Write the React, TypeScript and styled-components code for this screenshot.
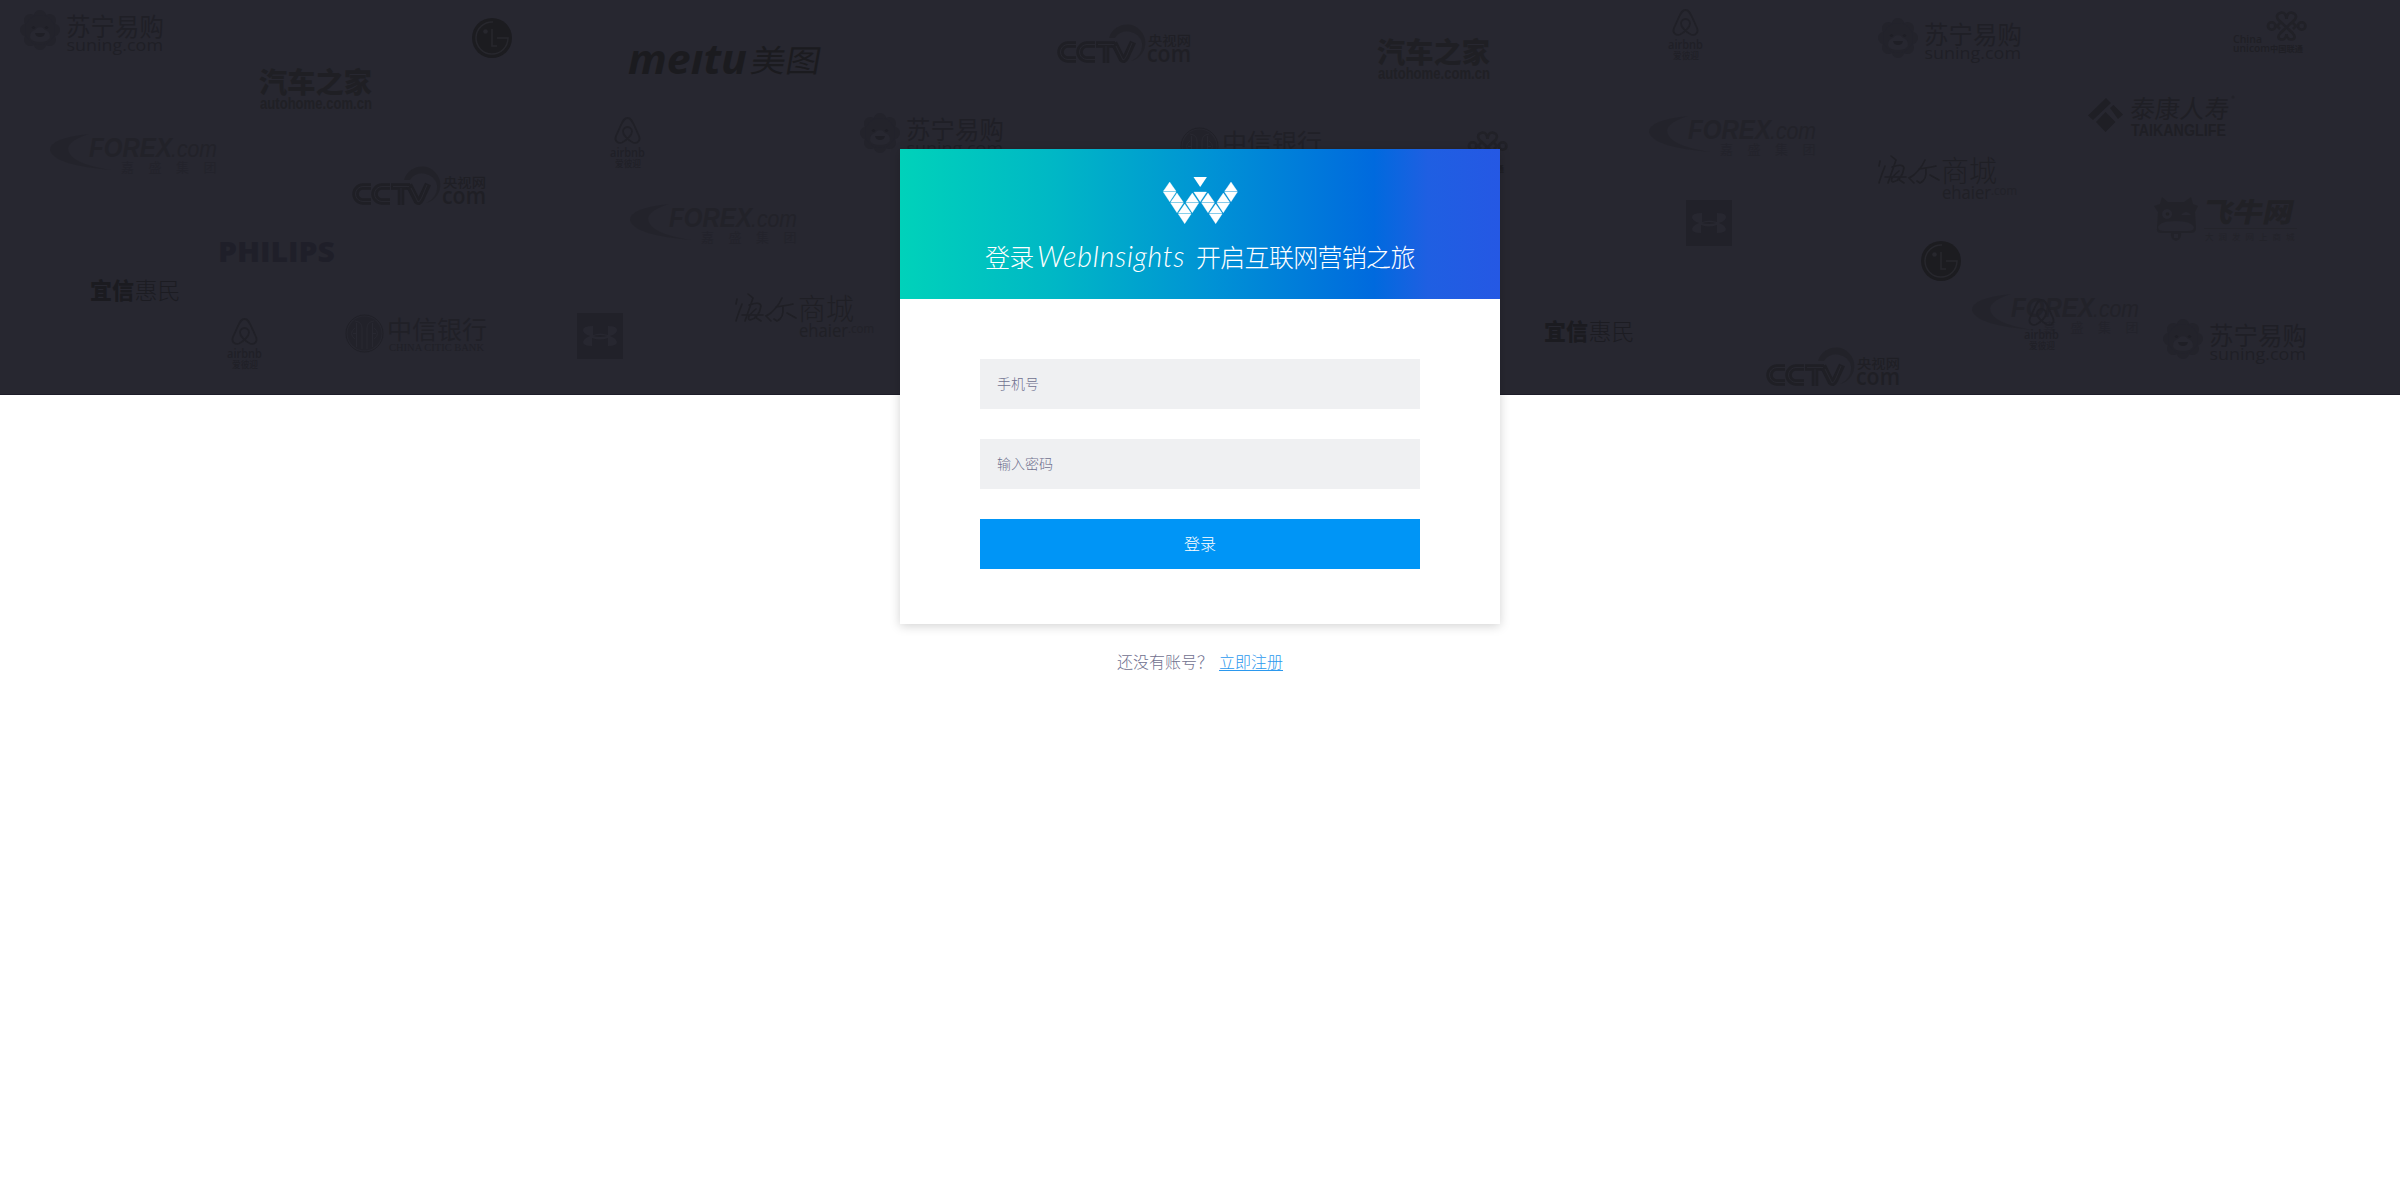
import React from "react";
import styled, { createGlobalStyle } from "styled-components";

const SANS = '"Liberation Sans", "Noto Sans CJK SC", sans-serif';
const CJK = '"Noto Sans CJK SC", sans-serif';
const ROUND = '"Open Sans", "Noto Sans CJK SC", sans-serif';

const GlobalStyle = createGlobalStyle`
  * { box-sizing: border-box; }
  body { margin: 0; background: #fff; font-family: ${CJK}; }
`;

const Page = styled.main`
  position: relative;
  display: flex;
  flex-direction: column;
  align-items: center;
  min-height: 1200px;
  padding-top: 149px;
`;

const LogoWall = styled.div`
  position: absolute;
  top: 0;
  left: 0;
  right: 0;
  height: 395px;
  overflow: hidden;
  background: #272730;
  border-bottom: 1px solid #1d1c28;
`;

const Mark = styled.svg<{ $x: number; $y: number; $tone?: string }>`
  position: absolute;
  left: ${(p) => p.$x}px;
  top: ${(p) => p.$y}px;
  overflow: visible;
  color: ${(p) => p.$tone || "#222229"};
  fill: currentColor;
`;

type WordProps = {
  x: number; y: number; w: number; size: number; children: string;
  weight?: number; italic?: boolean; family?: string; opacity?: number; transform?: string;
};
const Word = ({ x, y, w, size, children, weight = 400, italic, family = CJK, opacity, transform }: WordProps) => (
  <text x={x} y={y} textLength={w} lengthAdjust="spacingAndGlyphs" fontSize={size} fontWeight={weight}
    fontStyle={italic ? "italic" : "normal"} fontFamily={family} opacity={opacity} transform={transform}>
    {children}
  </text>
);

type At = { x: number; y: number };

const Suning = ({ x, y }: At) => (
  <Mark $x={x} $y={y} width="143" height="46" $tone="#1f1f26">
    <g opacity="0.45">
      {[0, 45, 90, 135, 180, 225, 270, 315].map((a) => (
        <circle key={a} cx="20" cy="6.5" r="6.5" transform={`rotate(${a} 20 20)`} />
      ))}
      <circle cx="20" cy="20" r="15" />
    </g>
    <path fill="#272730" d="M10 27Q10 21 15 20Q17 17 20 17Q23 17 25 20Q30 21 30 27Q29 32 20 32Q11 32 10 27z" />
    <circle cx="13.5" cy="17.5" r="1.6" /><circle cx="26.5" cy="17.5" r="1.6" />
    <path d="M15 23h10q-1 4-5 4t-5-4z" />
    <Word x={46} y={25.5} w={98} size={25} weight={400} opacity={0.9}>苏宁易购</Word>
    <Word x={46.5} y={40.5} w={96.5} size={17} family={ROUND} opacity={0.9}>suning.com</Word>
  </Mark>
);

const Autohome = ({ x, y }: At) => (
  <Mark $x={x} $y={y} width="112" height="40" $tone="#1f1f24">
    <Word x={-1} y={24} w={113} size={28} weight={900}>汽车之家</Word>
    <Word x={0} y={39.5} w={112} size={17} weight={700} family={SANS} opacity={0.85}>autohome.com.cn</Word>
  </Mark>
);

const Forex = ({ x, y }: At) => (
  <Mark $x={x} $y={y} width="168" height="40" $tone="#222229">
    <path opacity="0.7" d="M39 0Q0 4 0 16Q3 31 61 36Q20 30 18 15Q19 6 39 0z" />
    <Word x={39} y={22.5} w={83} size={27} weight={700} italic family={SANS}>FOREX</Word>
    <Word x={121} y={22.5} w={46} size={23} italic family={SANS}>.com</Word>
    <g opacity="0.6">
      {["嘉", "盛", "集", "团"].map((c, i) => (
        <Word key={c} x={71 + i * 27.5} y={37.5} w={13} size={13}>{c}</Word>
      ))}
    </g>
  </Mark>
);

const Cctv = ({ x, y }: At) => (
  <Mark $x={x} $y={y} width="133" height="38" $tone="#1f1f25">
    <path opacity="0.6" d="M51 13A18.5 18.5 0 1 1 73 36Q85 30 84 18A15 15 0 0 0 57 13z" />
    <g fill="none" stroke="currentColor" strokeWidth="6.5">
      <path d="M18 19.5H10A7.5 7.5 0 0 0 10 34.5H18M37 19.5H29A7.5 7.5 0 0 0 29 34.5H37M38 19.5H57M48 19.5V38" />
      <path d="M56 18L64 34Q66 36 68 32L75 17" />
    </g>
    <g fill="none" stroke="#292932" strokeWidth="0.8">
      <path d="M18 19.5H10A7.5 7.5 0 0 0 10 34.5H18M37 19.5H29A7.5 7.5 0 0 0 29 34.5H37M40 19.5H56M48 21V38M58 21L65 35Q67 35 69 30L74 18" />
    </g>
    <Word x={90} y={19.5} w={43} size={13} weight={500}>央视网</Word>
    <Word x={89} y={37} w={44} size={24} family={ROUND} weight={600}>com</Word>
  </Mark>
);

const Airbnb = ({ x, y }: At) => (
  <Mark $x={x} $y={y} width="36" height="51" $tone="#202027">
    <path fill="none" stroke="currentColor" strokeWidth="1.8"
      d="M17.5 1C14 1 13 4 11 8L6 19C4 24 8 27 12 25.5C17 23 22 18 22 14.5A4.3 4.3 0 0 0 13 14.5C13 18 18 23 23 25.5C27 27 31 24 29 19L24 8C22 4 21 1 17.5 1z" />
    <Word x={0} y={39.5} w={35} size={13} family={ROUND} weight={600}>airbnb</Word>
    <Word x={5} y={50} w={26} size={9} weight={500}>爱彼迎</Word>
  </Mark>
);

const Citic = ({ x, y }: At) => (
  <Mark $x={x} $y={y} width="142" height="40" $tone="#202027">
    <circle cx="19.5" cy="19.5" r="18.5" fill="none" stroke="currentColor" strokeWidth="1" />
    <circle cx="19.5" cy="19.5" r="17" opacity="0.6" />
    <path fill="none" stroke="#282831" strokeWidth="1" d="M10 7Q17 8 17 14V35M29 7Q22 8 22 14V35M11.5 9V33M27.5 9V33M10 14Q3 19.5 10 25M29 14Q36 19.5 29 25M8 19.5h3M28 19.5h3" />
    <Word x={42} y={24.5} w={100} size={25} weight={400}>中信银行</Word>
    <Word x={44} y={37} w={95} size={10} family='"Liberation Serif", serif'>CHINA CITIC BANK</Word>
  </Mark>
);

const UnderArmour = ({ x, y }: At) => (
  <Mark $x={x} $y={y} width="46" height="46" $tone="#212129">
    <rect width="46" height="46" />
    <path fill="#272730" d="M16 13Q5 13 6 18Q8 22 13 23Q7 25 6 29Q6 33 15 33V25Q23 28 31 25V33Q40 33 40 29Q39 25 33 23Q38 22 40 18Q41 13 31 13V22Q23 19 16 22zM16 23Q23 21 30 23Q23 25 16 23z" />
  </Mark>
);

const Lg = ({ x, y }: At) => (
  <Mark $x={x} $y={y} width="40" height="40" $tone="#1c1c20">
    <circle cx="20" cy="20" r="20" />
    <path fill="none" stroke="#27272d" strokeWidth="1.5" d="M21 4A16 16 0 1 0 36 20H25M20 11V28H25" />
    <circle cx="13.5" cy="13.5" r="2.3" fill="#27272d" />
  </Mark>
);

const Huimin = ({ x, y }: At) => (
  <Mark $x={x} $y={y} width="88" height="22" $tone="#1b1b20">
    <Word x={-1} y={19.5} w={44} size={23} weight={900}>宜信</Word>
    <Word x={43.5} y={19.5} w={46} size={23} weight={300} opacity={0.85}>惠民</Word>
  </Mark>
);

const Haier = ({ x, y }: At) => (
  <Mark $x={x} $y={y} width="139" height="45" $tone="#1f1f25">
    <g fill="none" stroke="currentColor" strokeWidth="1.6" strokeLinecap="round">
      <path d="M2 6L1 11M1 28Q2 24 7 11M13 1L18 5L10 28M14 12Q25 8 26 13Q24 25 15 27Q10 25 21 16M7 22H28M20 24L26 28" />
      <path d="M47 5Q42 16 33 22M41 14Q55 12 58 11M48 14Q49 25 42 28L39 26M36 20L31 23L36 28M52 20L61 25" />
    </g>
    <Word x={63} y={27} w={56} size={29} weight={300}>商城</Word>
    <Word x={64} y={43.5} w={49} size={18} family={ROUND} opacity={0.85}>ehaier</Word>
    <Word x={113} y={40} w={26} size={12} family={ROUND} opacity={0.6}>.com</Word>
  </Mark>
);

const Unicom = ({ x, y }: At) => (
  <Mark $x={x} $y={y} width="74" height="42" $tone="#1f1f25">
    <g fill="none" stroke="currentColor" strokeWidth="2.6" opacity="0.75">
      <circle cx="38.7" cy="15" r="3.7" />
      <circle cx="68.7" cy="15" r="3.7" />
      <path d="M42 15H44L47 12M65.500 15H63L60 12M44 15L47 18M63 15L60 18" />
      <path d="M53.500 8Q53 1.500 48.500 1.500Q42 3 45 8.500L59.500 22Q64 27 59 28.500Q54 29 53.500 23" />
      <path d="M53.500 8Q54 1.500 58.500 1.500Q65 3 62 8.500L47.500 22Q43 27 48 28.500Q53 29 53.500 23" />
    </g>
    <Word x={0} y={32} w={29} size={11} family={ROUND} weight={600}>China</Word>
    <Word x={0} y={41} w={37} size={11} family={ROUND} weight={600}>unicom</Word>
    <Word x={37} y={40.5} w={33} size={8.5} weight={700}>中国联通</Word>
  </Mark>
);

const Taikang = ({ x, y }: At) => (
  <Mark $x={x} $y={y} width="147" height="43" $tone="#1f1f25">
    <path d="M0 21.5L18 4L23 9L5 26zM22 14L25.5 11L35 20.5L30 25zM17.5 18L27.5 28L17.5 38L8 28z" />
    <Word x={42} y={23.5} w={99} size={25} weight={400} transform="skewX(-6) translate(2 0)">泰康人寿</Word>
    <Word x={43} y={42} w={95} size={16.5} weight={700} family={SANS}>TAIKANGLIFE</Word>
    <circle cx="145" cy="3" r="1.500" opacity="0.6" />
  </Mark>
);

const Feiniu = ({ x, y }: At) => (
  <Mark $x={x} $y={y} width="143" height="44" $tone="#212126">
    <path opacity="0.7" fillRule="evenodd" d="M8 0L14 5H30L37 0L39 7L44 9L41 15L42 31Q42 36 37 36H27Q28 42 22 44Q16 42 17 36H7Q2 36 3 31L4 15L0 9L6 7zM4 30Q4 34 10 34H34Q40 34 40 30Q37 24 22 24Q6 24 4 30zM13 12A5 5 0 1 0 13.1 12zM27 18H37Q32 12 27 18zM20 37V41H24V37z" />
    <circle cx="13.5" cy="17" r="1.8" />
    <Word x={48} y={25} w={90} size={27} weight={900} transform="skewX(-12) translate(5 0)">飞牛网</Word>
    <rect x="50" y="31" width="93" height="1" opacity="0.5" />
    <g opacity="0.6">
      {"大润发网上商城".split("").map((c, i) => (
        <Word key={i} x={51 + i * 13.5} y={42.5} w={8.5} size={8.5}>{c}</Word>
      ))}
    </g>
  </Mark>
);

const Meitu = ({ x, y }: At) => (
  <Mark $x={x} $y={y} width="192" height="30" $tone="#1b1b1f">
    <Word x={0} y={28.5} w={119} size={41} weight={700} italic family={ROUND}>meıtu</Word>
    <Word x={121} y={27} w={70} size={31} weight={400} transform="skewX(-10) translate(5 0)">美图</Word>
  </Mark>
);

const Philips = ({ x, y }: At) => (
  <Mark $x={x} $y={y} width="116" height="21" $tone="#1f1f29">
    <Word x={-2} y={20} w={117} size={28} weight={800} family={ROUND}>PHILIPS</Word>
  </Mark>
);

const Card = styled.section`
  position: relative;
  display: flex;
  flex-direction: column;
  width: 600px;
  height: 475px;
  background: #fff;
  box-shadow: 0 2px 10px rgba(0, 0, 0, 0.18);
`;

const Banner = styled.header`
  display: flex;
  flex-direction: column;
  align-items: center;
  height: 150px;
  padding-top: 28px;
  color: #fff;
  background: linear-gradient(90deg, #00d2ba 0%, #00b8c5 25%, #0092d5 52%, #006ade 79%, #1f5fe2 88%, #2558e4 100%);
`;

const Emblem = styled.svg`
  width: 76px;
  height: 48px;
  fill: #fff;
`;

const Slogan = styled.h1`
  display: flex;
  width: 430px;
  height: 40px;
  margin: 11px 0 0;
  font-family: ${CJK};
  font-weight: 300;
  line-height: 40px;
  white-space: nowrap;
`;

const Script = styled.span<{ $w: number; $latin?: boolean }>`
  flex: none;
  width: ${(p) => p.$w}px;
  letter-spacing: ${(p) => (p.$latin ? "0.7px" : "-0.7px")};
  font-family: ${(p) => (p.$latin ? 'Lato, "Liberation Sans", sans-serif' : CJK)};
  font-size: ${(p) => (p.$latin ? 28.5 : 25)}px;
  font-style: ${(p) => (p.$latin ? "italic" : "normal")};
`;

const Form = styled.form`
  display: flex;
  flex-direction: column;
  gap: 30px;
  padding: 60px 80px 0;
`;

const Field = styled.input`
  height: 50px;
  padding: 0 17px 2px;
  border: 0;
  border-radius: 0;
  outline: 0;
  background: #eff0f2;
  color: #70708f;
  font: 300 14px ${CJK};
  &::placeholder { color: #70708f; opacity: 1; }
`;

const Submit = styled.button`
  height: 50px;
  padding: 0 0 2px;
  border: 0;
  background: #0095f6;
  color: #fff;
  font: 300 16px ${CJK};
`;

const SignUp = styled.p`
  display: flex;
  gap: 6px;
  margin: 24px 0 0;
  color: #70708f;
  font-size: 16px;
  font-weight: 300;
  line-height: 26px;
`;

const SignUpLink = styled.a`
  color: #2b98ee;
  text-decoration: underline;
  text-underline-offset: 2px;
  text-decoration-thickness: 1px;
`;

const UP = [[7.7, 5], [15, 16], [22.7, 27], [30.3, 16], [46, 16], [53.7, 27], [61.3, 16], [69, 5]];
const DOWN = [[7.7, 15], [15, 26], [22.7, 37], [30.3, 26], [38.2, 15], [46, 26], [53.7, 37], [61.3, 26], [69, 15]];

const WLogo = () => (
  <Emblem viewBox="0 0 76 48" aria-label="WebInsights">
    <path d="M31.5 0h13.400l-6.700 10z" />
    <g stroke="#fff" strokeOpacity="0.45" strokeWidth="0.7">
      {UP.map(([cx, y], i) => <path key={i} d={`M${cx} ${y}l6.400 9.300h-12.800z`} />)}
      {DOWN.map(([cx, y], i) => <path key={i} d={`M${cx - 6.4} ${y}h12.800l-6.400 9.700z`} />)}
    </g>
  </Emblem>
);

export default function App() {
  return (
    <>
      <GlobalStyle />
      <Page>
        <LogoWall>
          <Suning x={20} y={10} /><Suning x={860} y={113} /><Suning x={1878} y={18} /><Suning x={2163} y={319} />
          <Autohome x={260} y={69} /><Autohome x={1378} y={39} />
          <Forex x={50} y={134} /><Forex x={630} y={204} /><Forex x={1649} y={116} /><Forex x={1972} y={294} />
          <Cctv x={353} y={167} /><Cctv x={1058} y={25} /><Cctv x={1767} y={348} />
          <Airbnb x={227} y={318} /><Airbnb x={610} y={117} /><Airbnb x={1668} y={9} /><Airbnb x={2024} y={299} />
          <Citic x={345} y={314} /><Citic x={1180} y={127} />
          <UnderArmour x={577} y={313} /><UnderArmour x={1686} y={200} />
          <Lg x={472} y={18} /><Lg x={1921} y={241} />
          <Huimin x={91} y={279} /><Huimin x={1545} y={320} />
          <Haier x={735} y={293} /><Haier x={1878} y={155} />
          <Unicom x={2233} y={11} /><Unicom x={1434} y={131} />
          <Taikang x={2088} y={94} />
          <Feiniu x={2154} y={197} />
          <Meitu x={628} y={45} />
          <Philips x={220} y={242} />
        </LogoWall>
        <Card>
          <Banner>
            <WLogo />
            <Slogan>
              <Script $w={52}>登录</Script>
              <Script $w={159} $latin>WebInsights</Script>
              <Script $w={219}>开启互联网营销之旅</Script>
            </Slogan>
          </Banner>
          <Form onSubmit={(e) => e.preventDefault()}>
            <Field placeholder="手机号" />
            <Field type="password" placeholder="输入密码" />
            <Submit>登录</Submit>
          </Form>
        </Card>
        <SignUp>
          <span>还没有账号？</span>
          <SignUpLink>立即注册</SignUpLink>
        </SignUp>
      </Page>
    </>
  );
}
